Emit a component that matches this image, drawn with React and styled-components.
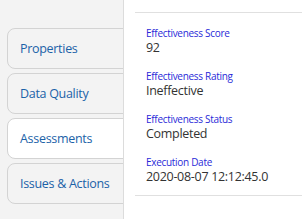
import styled, { createGlobalStyle } from 'styled-components';

const GlobalStyle = createGlobalStyle`
  html, body {
    margin: 0;
    padding: 0;
    background: #f3f3f3;
    font-family: "Open Sans", "Noto Sans", Arial, sans-serif;
  }
`;

const tabs = [
  { label: 'Properties' },
  { label: 'Data Quality' },
  { label: 'Assessments', active: true },
  { label: 'Issues & Actions' },
];

const fields = [
  { label: 'Effectiveness Score', value: '92' },
  { label: 'Effectiveness Rating', value: 'Ineffective' },
  { label: 'Effectiveness Status', value: 'Completed' },
  { label: 'Execution Date', value: '2020-08-07 12:12:45.0' },
];

const App = () => {
  return (
    <>
      <GlobalStyle />
      <Page>
        <Nav>
          {tabs.map((t) => (
            <Tab key={t.label} $active={t.active}>
              {t.label}
            </Tab>
          ))}
        </Nav>
        <Panel>
          <Divider />
          <Fields>
            {fields.map((f) => (
              <Field key={f.label}>
                <Label>{f.label}</Label>
                <Value>{f.value}</Value>
              </Field>
            ))}
          </Fields>
          <Divider />
        </Panel>
      </Page>
    </>
  );
};
export default App;

const Page = styled.div`
  display: flex;
  width: 302px;
  height: 219px;
  overflow: hidden;
`;

const Nav = styled.nav`
  width: 123px;
  flex-shrink: 0;
  overflow: hidden;
  padding: 28px 0 0 7px;
  box-sizing: border-box;
  display: flex;
  flex-direction: column;
  gap: 4px;
`;

const Tab = styled.div`
  height: 41px;
  width: 140px;
  box-sizing: border-box;
  border: 1px solid #d3d3d3;
  border-radius: 8px 0 0 8px;
  background: ${(p) => (p.$active ? '#ffffff' : '#f3f3f3')};
  color: #1b62a8;
  font-size: 12.5px;
  letter-spacing: -0.3px;
  display: flex;
  align-items: center;
  padding-left: 12px;
  white-space: nowrap;
`;

const Panel = styled.section`
  flex: 1;
  background: #ffffff;
  border-left: 1px solid #dcdcdc;
  padding: 12px 0 0 11px;
  box-sizing: border-box;
`;

const Divider = styled.div`
  border-top: 1px solid #e0e0e0;
`;

const Fields = styled.div`
  display: flex;
  flex-direction: column;
  gap: 13px;
  padding: 13px 0 10px 11px;
`;

const Field = styled.div`
  display: flex;
  flex-direction: column;
`;

const Label = styled.span`
  font-size: 10px;
  line-height: 14px;
  letter-spacing: -0.3px;
  color: #2a2ad8;
`;

const Value = styled.span`
  font-size: 12.5px;
  line-height: 16px;
  letter-spacing: -0.3px;
  color: #333333;
`;
